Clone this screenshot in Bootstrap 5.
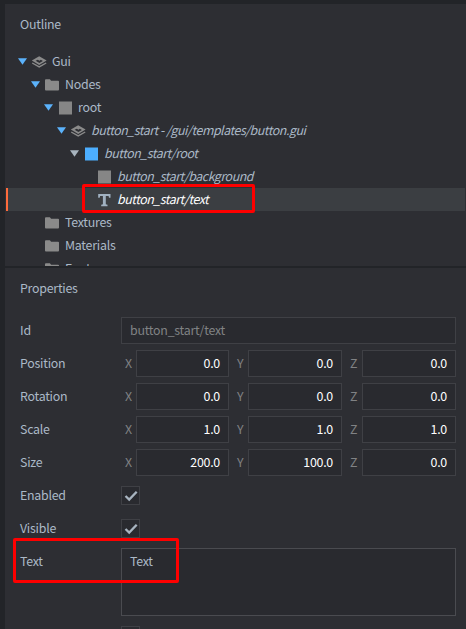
<!DOCTYPE html>
<html lang="en">
<head>
<meta charset="utf-8">
<title>Outline and Properties</title>
<link href="https://cdn.jsdelivr.net/npm/bootstrap@5.3.0/dist/css/bootstrap.min.css" rel="stylesheet">
<style>
body{background:#222428;color:#abb9c7;font-family:"Noto Sans CJK SC","Noto Sans",sans-serif;font-size:12.4px;letter-spacing:-.25px;line-height:23px;height:629px;padding:4px 0 0 5px}
.pane{background:#2d2e33}
.outline{height:262px;margin-bottom:2px}
.pane-title{height:46px;padding:9px 15px 0}
.node{height:23px;padding-left:12px;margin:0 1px;white-space:nowrap}
.arrow{width:9px;height:7px;color:#5bb2fb;margin-right:4px}
.arrow.dim{color:#a8b4bf}
.ico{width:16px;height:16px;margin-right:5px;color:#8a8a8a}
.ico.sq{color:#868686}
.ico.blue{color:#4caeff}
.ico.type{color:#a0b1c1}
.l1{padding-left:25px}.l2{padding-left:38px}.l3{padding-left:51px}.l4{padding-left:64px}.l5{padding-left:90px}
.tpl{font-style:italic;letter-spacing:-.47px}
.chosen{background:#3b3e42;color:#fff;box-shadow:inset 2px 0 #fd6b3c}
.props{height:361px}
.props .pane-title{height:49px;padding-top:9px}
.prop{height:27px;margin:0 10px 6px 15px;line-height:27px}
.prop.tall{height:68px;margin-bottom:10px}
.prop-name{width:101px}
.field{background:#292a2f;border:1px solid #3f4045;height:27px;line-height:25px;padding:0 8px}
.locked{color:#808284}
.prop.tall .field{height:68px;border-color:#4a4b50}
.num{color:#fff;text-align:right}
.axes{display:grid;grid-template-columns:15px 93px 19px 94px 20px 94px}
.axis{color:#808284;padding-left:8px}
.axis:first-child{padding-left:4px}
.tick{width:19px;height:19px;background:#292a2f;border:1px solid #3f4045}
.tick svg{width:17px;height:17px;display:block}
.mark-box{position:absolute;border:3px solid #fe0000;border-radius:2px}
.mark-node{left:82px;top:184px;width:173px;height:29px}
.mark-text{left:13px;top:538px;width:166px;height:45px}
</style>
<script src="https://cdn.jsdelivr.net/npm/bootstrap@5.3.0/dist/js/bootstrap.bundle.min.js"></script>
</head>
<body class="position-relative overflow-hidden">
<svg class="d-none">
  <symbol id="tri" viewBox="0 0 9 7"><path d="M0 .3h9L4.5 6.7z" fill="currentColor"/></symbol>
  <symbol id="folder" viewBox="0 0 16 16"><path d="M1 3.200q0-.9.9-.9h4l1.200 1.400h7q.9 0 .9.9v8q0 .9-.9.9H1.900q-.9 0-.9-.9z" fill="currentColor"/></symbol>
  <symbol id="square" viewBox="0 0 16 16"><path d="M2 1.500h13v13H2z" fill="currentColor"/></symbol>
  <symbol id="layers" viewBox="0 0 16 16"><path d="M8.200 2.200 15.600 6.600 8.200 11 .8 6.600z" fill="currentColor"/><path d="m4.600 6.800 3.800 2.100 3.500-2-2.100-1.100-1.300.9-1.700-1z" fill="#2d2e33"/><path d="m1.200 9 7 3.900 7-3.900" fill="none" stroke="currentColor" stroke-width="1.400"/></symbol>
  <symbol id="letter" viewBox="0 0 16 16"><path d="M2.200 2h12.300v3.700h-1.500l-.4-1.700H9.800v8.300l1.700.4v1.500H5.200v-1.500l1.700-.4V4H4.100l-.4 1.700H2.200z" fill="currentColor"/></symbol>
  <symbol id="check" viewBox="0 0 17 17"><path d="m3.500 9 3.700 3.600 7.500-7.800" fill="none" stroke="#a8b4c0" stroke-width="2.300"/></symbol>
</svg>

<section class="pane outline overflow-hidden">
  <div class="pane-title">Outline</div>
  <div class="node d-flex align-items-center"><svg class="arrow"><use href="#tri"/></svg><svg class="ico"><use href="#layers"/></svg><span>Gui</span></div>
  <div class="node l1 d-flex align-items-center"><svg class="arrow"><use href="#tri"/></svg><svg class="ico"><use href="#folder"/></svg><span>Nodes</span></div>
  <div class="node l2 d-flex align-items-center"><svg class="arrow"><use href="#tri"/></svg><svg class="ico sq"><use href="#square"/></svg><span>root</span></div>
  <div class="node l3 d-flex align-items-center"><svg class="arrow"><use href="#tri"/></svg><svg class="ico"><use href="#layers"/></svg><span class="tpl">button_start - /gui/templates/button.gui</span></div>
  <div class="node l4 d-flex align-items-center"><svg class="arrow dim"><use href="#tri"/></svg><svg class="ico blue"><use href="#square"/></svg><span class="tpl">button_start/root</span></div>
  <div class="node l5 d-flex align-items-center"><svg class="ico sq"><use href="#square"/></svg><span class="tpl">button_start/background</span></div>
  <div class="node l5 chosen d-flex align-items-center"><svg class="ico type"><use href="#letter"/></svg><span class="tpl">button_start/text</span></div>
  <div class="node l2 d-flex align-items-center"><svg class="ico"><use href="#folder"/></svg><span>Textures</span></div>
  <div class="node l2 d-flex align-items-center"><svg class="ico"><use href="#folder"/></svg><span>Materials</span></div>
  <div class="node l2 d-flex align-items-center"><svg class="ico"><use href="#folder"/></svg><span>Fonts</span></div>
</section>

<section class="pane props overflow-hidden">
  <div class="pane-title">Properties</div>
  <div class="prop d-flex"><div class="prop-name">Id</div><div class="field locked flex-fill">button_start/text</div></div>
  <div class="prop d-flex"><div class="prop-name">Position</div><div class="axes"><span class="axis">X</span><div class="field num">0.0</div><span class="axis">Y</span><div class="field num">0.0</div><span class="axis">Z</span><div class="field num">0.0</div></div></div>
  <div class="prop d-flex"><div class="prop-name">Rotation</div><div class="axes"><span class="axis">X</span><div class="field num">0.0</div><span class="axis">Y</span><div class="field num">0.0</div><span class="axis">Z</span><div class="field num">0.0</div></div></div>
  <div class="prop d-flex"><div class="prop-name">Scale</div><div class="axes"><span class="axis">X</span><div class="field num">1.0</div><span class="axis">Y</span><div class="field num">1.0</div><span class="axis">Z</span><div class="field num">1.0</div></div></div>
  <div class="prop d-flex"><div class="prop-name">Size</div><div class="axes"><span class="axis">X</span><div class="field num">200.0</div><span class="axis">Y</span><div class="field num">100.0</div><span class="axis">Z</span><div class="field num">0.0</div></div></div>
  <div class="prop d-flex align-items-center"><div class="prop-name">Enabled</div><div class="tick"><svg><use href="#check"/></svg></div></div>
  <div class="prop d-flex align-items-center"><div class="prop-name">Visible</div><div class="tick"><svg><use href="#check"/></svg></div></div>
  <div class="prop tall d-flex"><div class="prop-name">Text</div><div class="field flex-fill">Text</div></div>
  <div class="prop d-flex"><div class="prop-name"></div><div class="tick"></div></div>
</section>

<div class="mark-box mark-node"></div>
<div class="mark-box mark-text"></div>
</body>
</html>
